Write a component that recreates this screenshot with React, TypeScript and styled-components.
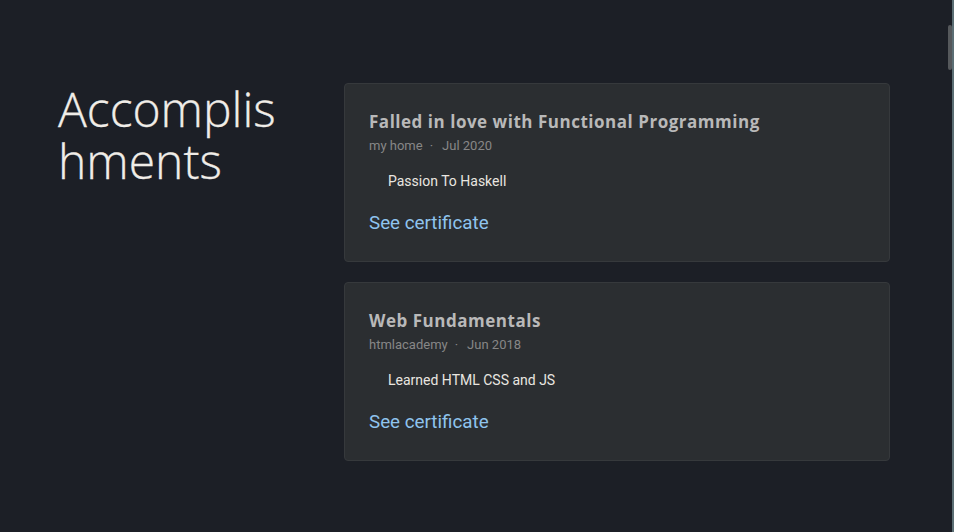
import React from "react";
import styled, { createGlobalStyle } from "styled-components";

const GlobalStyle = createGlobalStyle`
  html, body {
    margin: 0;
    padding: 0;
    background: #1c1f26;
    overflow: hidden;
  }
  body {
    font-family: Roboto, "Liberation Sans", sans-serif;
    color: #e6e6e6;
  }
`;

const Page = styled.main`
  box-sizing: border-box;
  width: 954px;
  height: 532px;
  padding: 83px 64px 0 58px;
  display: grid;
  grid-template-columns: 286px 546px;
  align-items: start;
`;

const Heading = styled.h1`
  margin: 0;
  width: 232px;
  font-family: "Open Sans", "Liberation Sans", sans-serif;
  font-weight: 300;
  font-size: 48px;
  line-height: 52px;
  color: #f0ede8;
  word-break: break-all;
  -webkit-text-stroke: 0.3px #f0ede8;
`;

const List = styled.div`
  display: flex;
  flex-direction: column;
  gap: 20px;
`;

const Card = styled.article`
  background: #2b2e31;
  border: 1px solid #36393c;
  border-radius: 4px;
  padding: 24px 24px 26px 24px;
  display: flex;
  flex-direction: column;
`;

const Title = styled.h2`
  margin: 0;
  font-family: "Open Sans", "Liberation Sans", sans-serif;
  font-weight: 700;
  font-size: 17px;
  line-height: 27px;
  letter-spacing: 0.52px;
  color: #b9b9b9;
`;

const Meta = styled.div`
  margin-top: 2px;
  font-size: 13px;
  line-height: 18px;
  color: #878787;
  display: flex;
`;

const Dot = styled.span`
  margin: 0 9px 0 7px;
`;

const Description = styled.p`
  margin: 16px 0 0 19px;
  font-size: 14px;
  line-height: 20px;
  color: #e9e6e0;
`;

const Link = styled.a`
  margin-top: 20px;
  font-size: 18.8px;
  line-height: 24px;
  color: #8fc4ee;
  text-decoration: none;
  align-self: flex-start;
`;

const ScrollTrack = styled.div`
  position: fixed;
  top: 0;
  right: 0;
  width: 7px;
  height: 532px;
  border-right: 2px solid #5b6e74;
  box-sizing: border-box;
`;

const ScrollThumb = styled.div`
  position: absolute;
  top: 25px;
  left: 1px;
  width: 4px;
  height: 45px;
  border-radius: 2px;
  background: #55585b;
`;

type Item = {
  title: string;
  org: string;
  date: string;
  text: string;
};

const items: Item[] = [
  {
    title: "Falled in love with Functional Programming",
    org: "my home",
    date: "Jul 2020",
    text: "Passion To Haskell",
  },
  {
    title: "Web Fundamentals",
    org: "htmlacademy",
    date: "Jun 2018",
    text: "Learned HTML CSS and JS",
  },
];

export default function App() {
  return (
    <>
      <GlobalStyle />
      <Page>
        <Heading>Accomplishments</Heading>
        <List>
          {items.map((it) => (
            <Card key={it.title}>
              <Title>{it.title}</Title>
              <Meta>
                <span>{it.org}</span>
                <Dot>·</Dot>
                <span>{it.date}</span>
              </Meta>
              <Description>{it.text}</Description>
              <Link href="#">See certificate</Link>
            </Card>
          ))}
        </List>
      </Page>
      <ScrollTrack>
        <ScrollThumb />
      </ScrollTrack>
    </>
  );
}
